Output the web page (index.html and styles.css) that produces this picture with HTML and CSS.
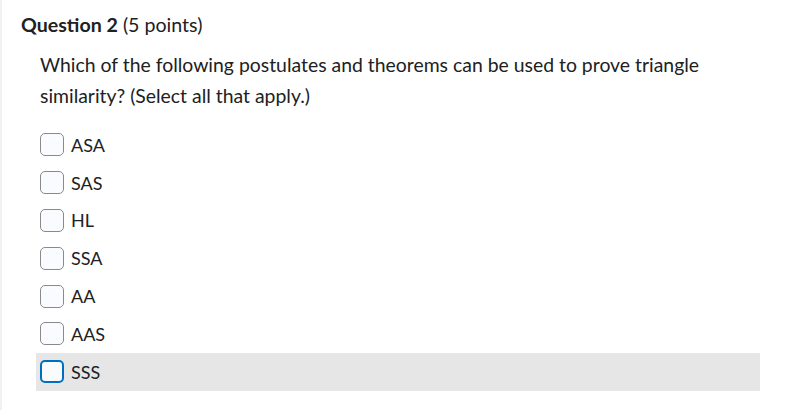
FILE: index.html
```html
<!DOCTYPE html>
<html>
<head>
<meta charset="utf-8">
<link rel="stylesheet" href="styles.css">
</head>
<body>
<div class="page">
  <h2 class="q-title"><strong>Question 2</strong> (5 points)</h2>
  <div class="q-body">
    <p class="q-text">Which of the following postulates and theorems can be used to prove triangle similarity? (Select all that apply.)</p>
    <ul class="options">
      <li class="option"><span class="box"></span><span class="label">ASA</span></li>
      <li class="option"><span class="box"></span><span class="label">SAS</span></li>
      <li class="option"><span class="box"></span><span class="label">HL</span></li>
      <li class="option"><span class="box"></span><span class="label">SSA</span></li>
      <li class="option"><span class="box"></span><span class="label">AA</span></li>
      <li class="option"><span class="box"></span><span class="label">AAS</span></li>
      <li class="option hover"><span class="box focus"></span><span class="label">SSS</span></li>
    </ul>
  </div>
</div>
</body>
</html>
```

FILE: styles.css
```css
html, body {
  margin: 0;
  padding: 0;
  background: #ffffff;
}
body {
  font-family: Lato, "Open Sans", sans-serif;
  color: #202122;
}
.page {
  border-left: 2px solid #f1f1f1;
  height: 410px;
  box-sizing: border-box;
  padding: 11px 0 0 19px;
}
.q-title {
  margin: 0;
  font-size: 19.6px;
  font-weight: 400;
  line-height: 28px;
}
.q-title strong {
  font-weight: 700;
}
.q-body {
  padding-left: 17px;
}
.q-text {
  margin: 10px 0 0 2px;
  width: 705px;
  font-size: 19.4px;
  line-height: 31px;
}
.options {
  list-style: none;
  margin: 15px 0 0 -2px;
  padding: 0;
  width: 724px;
}
.option {
  display: flex;
  align-items: center;
  height: 37.8px;
  padding-left: 4px;
}
.option.hover {
  background: #e6e6e6;
}
.box {
  box-sizing: border-box;
  width: 24px;
  height: 23px;
  border: 1px solid #8a8a8a;
  border-radius: 5px;
  background: #f9fbff;
  margin-right: 7px;
}
.box.focus {
  border: 2px solid #006fbf;
}
.label {
  font-size: 18px;
  line-height: 22px;
}
```
